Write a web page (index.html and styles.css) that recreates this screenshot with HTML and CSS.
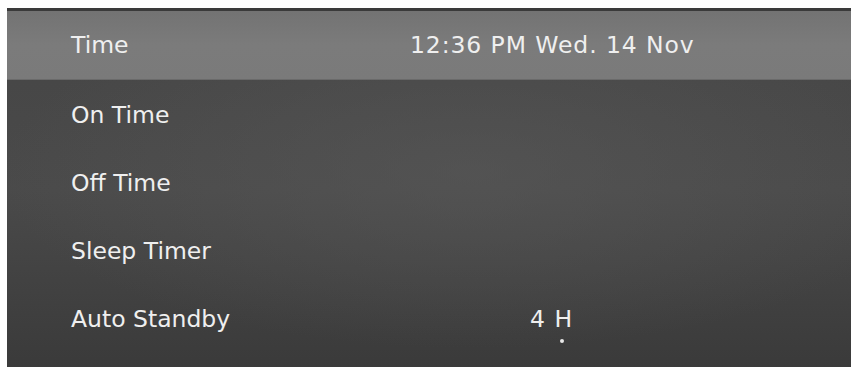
FILE: index.html
```html
<!DOCTYPE html>
<html>
<head>
<meta charset="utf-8">
<link rel="stylesheet" href="styles.css">
</head>
<body>
<div class="panel">
  <div class="row selected">
    <span class="label">Time</span>
    <span class="value time-value">12:36 PM Wed. 14 Nov</span>
  </div>
  <div class="rows">
    <div class="row"><span class="label">On Time</span></div>
    <div class="row"><span class="label">Off Time</span></div>
    <div class="row"><span class="label">Sleep Timer</span></div>
    <div class="row">
      <span class="label">Auto Standby</span>
      <span class="value standby-value">4 H<span class="dot"></span></span>
    </div>
  </div>
</div>
</body>
</html>
```

FILE: styles.css
```css
html, body {
  margin: 0;
  padding: 0;
  background: #ffffff;
}
body {
  width: 854px;
  height: 367px;
  overflow: hidden;
  padding: 8px 3px 0 7px;
  box-sizing: border-box;
  font-family: "DejaVu Sans", "Liberation Sans", sans-serif;
}
.panel {
  height: 359px;
  border-top: 3px solid #3a3a3a;
  background:
    radial-gradient(ellipse 80% 70% at 55% 45%, rgba(90,90,90,0.55), rgba(40,40,40,0) 70%),
    linear-gradient(180deg, #454545 0%, #4a4a4a 50%, #3a3a3a 100%);
  display: flex;
  flex-direction: column;
}
.row {
  height: 68px;
  display: flex;
  align-items: center;
  color: #efefef;
  font-size: 23.5px;
  padding-left: 64px;
  padding-top: 1px;
  box-sizing: border-box;
  position: relative;
}
.row.selected {
  height: 69px;
  padding-top: 0;
  background: linear-gradient(180deg, #737373 0%, #7b7b7b 50%, #7a7a7a 100%);
  border-bottom: 1px solid #6a6a6a;
}
.label {
  width: 339px;
}
.time-value {
  letter-spacing: 0.9px;
}
.standby-value {
  margin-left: 120px;
  position: relative;
  letter-spacing: 1px;
}
.dot {
  position: absolute;
  width: 4px;
  height: 4px;
  border-radius: 50%;
  background: #e8e8e8;
  right: 9px;
  bottom: -10px;
}
```
